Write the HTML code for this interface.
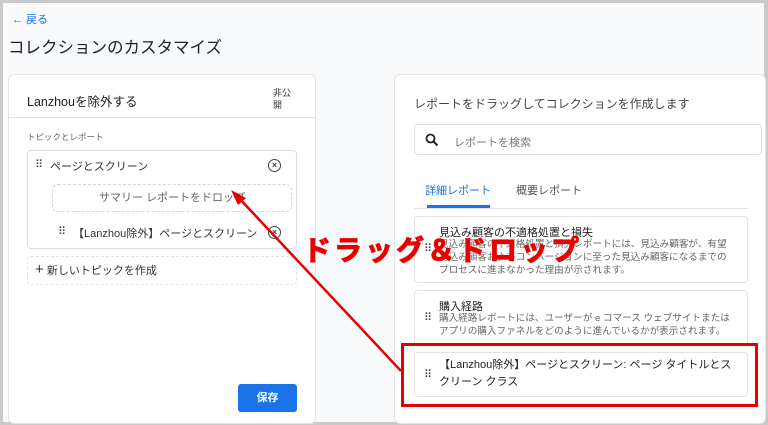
<!DOCTYPE html>
<html><head><meta charset="utf-8">
<style>
*{margin:0;padding:0;box-sizing:border-box}
body{width:768px;height:425px;overflow:hidden;background:#c9c9c9;font-family:"Liberation Sans","Noto Sans CJK JP",sans-serif;color:#202124;position:relative}
.abs{position:absolute}
#bg{left:3px;top:3px;width:761px;height:419px;background:#f8f9fa}
.panel{background:#fff;border:1px solid #e3e3e3;border-radius:6px}
.card{background:#fff;border:1px solid #dadce0;border-radius:4px}
.grip{font-size:11px;color:#444;letter-spacing:-1px;line-height:1}
.x{width:13px;height:13px;border:1.5px solid #444;border-radius:50%;font-size:9px;line-height:10px;text-align:center;color:#444;font-weight:bold}
</style></head><body>
<div id="bg" class="abs"></div>
<div class="abs" style="left:12px;top:11px;font-size:11px;color:#1a73e8">← 戻る</div>
<div class="abs" style="left:8px;top:34px;font-size:16.5px;color:#202124">コレクションのカスタマイズ</div>

<div class="abs panel" style="left:8px;top:74px;width:308px;height:350px"></div>
<div class="abs" style="left:9px;top:117px;width:306px;height:1px;background:#e3e3e3"></div>
<div class="abs" style="left:27px;top:91px;font-size:12.5px">Lanzhouを除外する</div>
<div class="abs" style="left:273px;top:87px;font-size:9px;line-height:12px;color:#333">非公<br>開</div>
<div class="abs" style="left:27px;top:131px;font-size:8.5px;color:#5f6368">トピックとレポート</div>
<div class="abs card" style="left:27px;top:150px;width:270px;height:99px"></div>
<div class="abs grip" style="left:35px;top:160px">⠿</div>
<div class="abs" style="left:50px;top:158px;font-size:11px;color:#333">ページとスクリーン</div>
<div class="abs x" style="left:268px;top:159px">×</div>
<div class="abs" style="left:52px;top:184px;width:240px;height:28px;border:1px dashed #d5d5d5;border-radius:6px;text-align:center;font-size:11px;line-height:26px;color:#666">サマリー レポートをドロップ</div>
<div class="abs grip" style="left:58px;top:227px">⠿</div>
<div class="abs" style="left:73px;top:225px;font-size:11px;color:#333">【Lanzhou除外】ページとスクリーン</div>
<div class="abs x" style="left:268px;top:226px">×</div>
<div class="abs" style="left:27px;top:256px;width:270px;height:29px;border:1px dashed #e3e3e3;border-radius:4px"></div>
<div class="abs" style="left:35px;top:262px;font-size:11px;color:#333"><span style="font-size:15px;line-height:11px">+</span> 新しいトピックを作成</div>
<div class="abs" style="left:238px;top:384px;width:59px;height:28px;background:#1a73e8;border-radius:3px;color:#fff;font-size:11px;font-weight:bold;text-align:center;line-height:28px">保存</div>

<div class="abs panel" style="left:394px;top:74px;width:372px;height:350px"></div>
<div class="abs" style="left:414px;top:95px;font-size:12px;color:#444">レポートをドラッグしてコレクションを作成します</div>
<div class="abs card" style="left:414px;top:124px;width:348px;height:31px;border-color:#e0e0e0"></div>
<svg class="abs" style="left:425px;top:133px" width="14" height="14" viewBox="0 0 14 14"><circle cx="5.5" cy="5.5" r="4" fill="none" stroke="#202124" stroke-width="1.8"/><path d="M8.5 8.5L12.5 12.5" stroke="#202124" stroke-width="2"/></svg>
<div class="abs" style="left:454px;top:134px;font-size:11px;color:#777">レポートを検索</div>
<div class="abs" style="left:425px;top:182px;font-size:11px;color:#1a73e8">詳細レポート</div>
<div class="abs" style="left:516px;top:182px;font-size:11px;color:#555">概要レポート</div>
<div class="abs" style="left:414px;top:208px;width:334px;height:1px;background:#e3e3e3"></div>
<div class="abs" style="left:427px;top:205px;width:63px;height:3px;background:#1a73e8"></div>

<div class="abs card" style="left:414px;top:216px;width:334px;height:67px;border-color:#e3e3e3"></div>
<div class="abs grip" style="left:424px;top:244px">⠿</div>
<div class="abs" style="left:439px;top:224px;font-size:11px;color:#222">見込み顧客の不適格処置と損失</div>
<div class="abs" style="left:439px;top:238px;font-size:9.6px;line-height:13px;color:#666;width:296px">見込み顧客の不適格処置と損失レポートには、見込み顧客が、有望見込み顧客およびコンバージョンに至った見込み顧客になるまでのプロセスに進まなかった理由が示されます。</div>

<div class="abs card" style="left:414px;top:290px;width:334px;height:56px;border-color:#e3e3e3"></div>
<div class="abs grip" style="left:424px;top:313px">⠿</div>
<div class="abs" style="left:439px;top:298px;font-size:11px;color:#222">購入経路</div>
<div class="abs" style="left:439px;top:312px;font-size:9.6px;line-height:13px;color:#666;width:300px">購入経路レポートには、ユーザーが e コマース ウェブサイトまたはアプリの購入ファネルをどのように進んでいるかが表示されます。</div>

<div class="abs card" style="left:414px;top:352px;width:334px;height:45px;border-color:#e3e3e3"></div>
<div class="abs grip" style="left:424px;top:370px">⠿</div>
<div class="abs" style="left:439px;top:357px;font-size:11px;line-height:17px;color:#222;width:300px">【Lanzhou除外】ページとスクリーン: ページ タイトルとスクリーン クラス</div>
<div class="abs" style="left:401px;top:343px;width:357px;height:64px;border:3px solid #e60000"></div>

<svg class="abs" style="left:0;top:0" width="768" height="425"><path d="M401 371L237 196" stroke="#e60000" stroke-width="2.5"/><path d="M231 190L246 198L238 205Z" fill="#e60000"/></svg>
<div class="abs" style="left:303px;top:229px;font-size:28px;font-weight:bold;color:#e60000;letter-spacing:3px;-webkit-text-stroke:1px #e60000;text-shadow:0 0 2px #fff,0 0 2px #fff">ドラッグ＆ドロップ</div>
</body></html>
